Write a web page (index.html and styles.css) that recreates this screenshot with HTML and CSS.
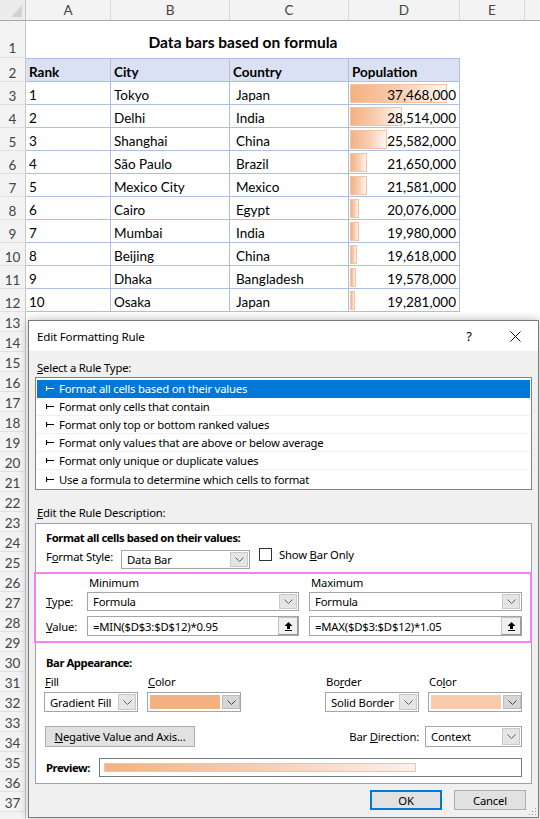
FILE: index.html
```html
<!DOCTYPE html>
<html>
<head>
<meta charset="utf-8">
<title>Data bars based on formula</title>
<link rel="stylesheet" href="styles.css">
</head>
<body>
<div class="sheet">
  <div class="row r-head">
    <div class="rh corner"><svg width="25" height="20" viewBox="0 0 25 20"><path d="M11 17H22V5Z" fill="#d2d2d2"/></svg></div>
    <div class="ch ca">A</div>
    <div class="ch cb">B</div>
    <div class="ch cc">C</div>
    <div class="ch cd">D</div>
    <div class="ch ce">E</div>
    <div class="ch cf"></div>
  </div>
  <div class="row r-title">
    <div class="rh">1</div>
    <div class="title">Data bars based on formula</div>
  </div>
  <div class="row r-tbl r-top">
    <div class="rh">2</div>
    <div class="c ca hd">Rank</div>
    <div class="c cb hd">City</div>
    <div class="c cc hd">Country</div>
    <div class="c cd hd">Population</div>
  </div>
  <div class="row r-tbl"><div class="rh">3</div><div class="c ca">1</div><div class="c cb">Tokyo</div><div class="c cc ct">Japan</div><div class="c cd num"><span class="bar" style="width:97px"></span><span class="v">37,468,000</span></div></div>
  <div class="row r-tbl"><div class="rh">4</div><div class="c ca">2</div><div class="c cb">Delhi</div><div class="c cc ct">India</div><div class="c cd num"><span class="bar" style="width:52px"></span><span class="v">28,514,000</span></div></div>
  <div class="row r-tbl"><div class="rh">5</div><div class="c ca">3</div><div class="c cb">Shanghai</div><div class="c cc ct">China</div><div class="c cd num"><span class="bar" style="width:37px"></span><span class="v">25,582,000</span></div></div>
  <div class="row r-tbl"><div class="rh">6</div><div class="c ca">4</div><div class="c cb">São Paulo</div><div class="c cc ct">Brazil</div><div class="c cd num"><span class="bar" style="width:17px"></span><span class="v">21,650,000</span></div></div>
  <div class="row r-tbl"><div class="rh">7</div><div class="c ca">5</div><div class="c cb">Mexico City</div><div class="c cc ct">Mexico</div><div class="c cd num"><span class="bar" style="width:17px"></span><span class="v">21,581,000</span></div></div>
  <div class="row r-tbl"><div class="rh">8</div><div class="c ca">6</div><div class="c cb">Cairo</div><div class="c cc ct">Egypt</div><div class="c cd num"><span class="bar" style="width:9px"></span><span class="v">20,076,000</span></div></div>
  <div class="row r-tbl"><div class="rh">9</div><div class="c ca">7</div><div class="c cb">Mumbai</div><div class="c cc ct">India</div><div class="c cd num"><span class="bar" style="width:9px"></span><span class="v">19,980,000</span></div></div>
  <div class="row r-tbl"><div class="rh">10</div><div class="c ca">8</div><div class="c cb">Beijing</div><div class="c cc ct">China</div><div class="c cd num"><span class="bar" style="width:7px"></span><span class="v">19,618,000</span></div></div>
  <div class="row r-tbl"><div class="rh">11</div><div class="c ca">9</div><div class="c cb">Dhaka</div><div class="c cc ct">Bangladesh</div><div class="c cd num"><span class="bar" style="width:6px"></span><span class="v">19,578,000</span></div></div>
  <div class="row r-tbl"><div class="rh">12</div><div class="c ca">10</div><div class="c cb">Osaka</div><div class="c cc ct">Japan</div><div class="c cd num"><span class="bar" style="width:5px"></span><span class="v">19,281,000</span></div></div>
  <div class="row r-e"><div class="rh">13</div></div>
  <div class="row r-e"><div class="rh">14</div></div>
  <div class="row r-e"><div class="rh">15</div></div>
  <div class="row r-e"><div class="rh">16</div></div>
  <div class="row r-e"><div class="rh">17</div></div>
  <div class="row r-e"><div class="rh">18</div></div>
  <div class="row r-e"><div class="rh">19</div></div>
  <div class="row r-e"><div class="rh">20</div></div>
  <div class="row r-e"><div class="rh">21</div></div>
  <div class="row r-e"><div class="rh">22</div></div>
  <div class="row r-e"><div class="rh">23</div></div>
  <div class="row r-e"><div class="rh">24</div></div>
  <div class="row r-e"><div class="rh">25</div></div>
  <div class="row r-e"><div class="rh">26</div></div>
  <div class="row r-e"><div class="rh">27</div></div>
  <div class="row r-e"><div class="rh">28</div></div>
  <div class="row r-e"><div class="rh">29</div></div>
  <div class="row r-e"><div class="rh">30</div></div>
  <div class="row r-e"><div class="rh">31</div></div>
  <div class="row r-e"><div class="rh">32</div></div>
  <div class="row r-e"><div class="rh">33</div></div>
  <div class="row r-e"><div class="rh">34</div></div>
  <div class="row r-e"><div class="rh">35</div></div>
  <div class="row r-e"><div class="rh">36</div></div>
  <div class="row r-e"><div class="rh">37</div></div>
  <div class="row r-e"><div class="rh"></div></div>

  <div class="dialog">
    <div class="dlg-title">
      <span class="dlg-caption">Edit Formatting Rule</span>
      <span class="tb-btn">?</span>
      <span class="tb-btn"><svg width="11" height="11" viewBox="0 0 11 11"><path d="M0.5 0.5L10.5 10.5M10.5 0.5L0.5 10.5" stroke="#111" stroke-width="1" fill="none"/></svg></span>
    </div>
    <div class="dlg-body">
      <div class="lbl sect1"><u>S</u>elect a Rule Type:</div>
      <div class="listbox">
        <div class="item sel"><svg class="arr" width="8" height="7" viewBox="0 0 8 7"><path d="M0.5 1V6M0.5 3.5H8" stroke="currentColor" stroke-width="1.2" fill="none"/></svg>Format all cells based on their values</div>
        <div class="item"><svg class="arr" width="8" height="7" viewBox="0 0 8 7"><path d="M0.5 1V6M0.5 3.5H8" stroke="currentColor" stroke-width="1.2" fill="none"/></svg>Format only cells that contain</div>
        <div class="item"><svg class="arr" width="8" height="7" viewBox="0 0 8 7"><path d="M0.5 1V6M0.5 3.5H8" stroke="currentColor" stroke-width="1.2" fill="none"/></svg>Format only top or bottom ranked values</div>
        <div class="item"><svg class="arr" width="8" height="7" viewBox="0 0 8 7"><path d="M0.5 1V6M0.5 3.5H8" stroke="currentColor" stroke-width="1.2" fill="none"/></svg>Format only values that are above or below average</div>
        <div class="item"><svg class="arr" width="8" height="7" viewBox="0 0 8 7"><path d="M0.5 1V6M0.5 3.5H8" stroke="currentColor" stroke-width="1.2" fill="none"/></svg>Format only unique or duplicate values</div>
        <div class="item last"><svg class="arr" width="8" height="7" viewBox="0 0 8 7"><path d="M0.5 1V6M0.5 3.5H8" stroke="currentColor" stroke-width="1.2" fill="none"/></svg>Use a formula to determine which cells to format</div>
      </div>
      <div class="lbl sect2"><u>E</u>dit the Rule Description:</div>
      <div class="desc">
        <div class="b d-title">Format all cells based on their values:</div>
        <div class="style-row">
          <span class="fs-lbl">F<u>o</u>rmat Style:</span>
          <div class="dd dd-style"><span class="dd-text">Data Bar</span><span class="dd-btn"><svg width="9" height="5" viewBox="0 0 9 5"><path d="M0.5 0.5L4.5 4.5L8.5 0.5" fill="none" stroke="#606060"/></svg></span></div>
          <span class="chk"></span>
          <span class="chk-lbl">Show <u>B</u>ar Only</span>
        </div>
        <div class="pink">
          <div class="mm-row r-mm">
            <span class="mm-lbl"></span>
            <span class="mm-col c1 cap">Minimum</span>
            <span class="mm-col c2 cap">Maximum</span>
          </div>
          <div class="mm-row r-type">
            <span class="mm-lbl"><u>T</u>ype:</span>
            <div class="dd mm-col c1"><span class="dd-text">Formula</span><span class="dd-btn"><svg width="9" height="5" viewBox="0 0 9 5"><path d="M0.5 0.5L4.5 4.5L8.5 0.5" fill="none" stroke="#606060"/></svg></span></div>
            <div class="dd mm-col c2"><span class="dd-text">Formula</span><span class="dd-btn"><svg width="9" height="5" viewBox="0 0 9 5"><path d="M0.5 0.5L4.5 4.5L8.5 0.5" fill="none" stroke="#606060"/></svg></span></div>
          </div>
          <div class="mm-row r-val">
            <span class="mm-lbl"><u>V</u>alue:</span>
            <div class="inp mm-col c1"><span class="dd-text">=MIN($D$3:$D$12)*0.95</span><span class="ref-btn"><svg width="9" height="9" viewBox="0 0 9 9"><path d="M4.5 0L8.5 4H6V7H3V4H0.5Z" fill="#000"/><rect x="1" y="8" width="7" height="1" fill="#000"/></svg></span></div>
            <div class="inp mm-col c2"><span class="dd-text">=MAX($D$3:$D$12)*1.05</span><span class="ref-btn"><svg width="9" height="9" viewBox="0 0 9 9"><path d="M4.5 0L8.5 4H6V7H3V4H0.5Z" fill="#000"/><rect x="1" y="8" width="7" height="1" fill="#000"/></svg></span></div>
          </div>
        </div>
        <div class="b bar-app">Bar Appearance:</div>
        <div class="app-row">
          <div class="grp g1">
            <div class="glbl"><u>F</u>ill</div>
            <div class="dd"><span class="dd-text">Gradient Fill</span><span class="dd-btn"><svg width="9" height="5" viewBox="0 0 9 5"><path d="M0.5 0.5L4.5 4.5L8.5 0.5" fill="none" stroke="#606060"/></svg></span></div>
          </div>
          <div class="grp g2">
            <div class="glbl"><u>C</u>olor</div>
            <div class="dd clr"><span class="sw sw1"></span><span class="dd-btn dark"><svg width="9" height="5" viewBox="0 0 9 5"><path d="M0.5 0.5L4.5 4.5L8.5 0.5" fill="none" stroke="#404040"/></svg></span></div>
          </div>
          <div class="grp g3">
            <div class="glbl">Bo<u>r</u>der</div>
            <div class="dd"><span class="dd-text">Solid Border</span><span class="dd-btn"><svg width="9" height="5" viewBox="0 0 9 5"><path d="M0.5 0.5L4.5 4.5L8.5 0.5" fill="none" stroke="#606060"/></svg></span></div>
          </div>
          <div class="grp g4">
            <div class="glbl">Co<u>l</u>or</div>
            <div class="dd clr"><span class="sw sw2"></span><span class="dd-btn dark"><svg width="9" height="5" viewBox="0 0 9 5"><path d="M0.5 0.5L4.5 4.5L8.5 0.5" fill="none" stroke="#404040"/></svg></span></div>
          </div>
        </div>
        <div class="neg-row">
          <div class="btn neg"><u>N</u>egative Value and Axis...</div>
          <span class="bd-lbl">Bar <u>D</u>irection:</span>
          <div class="dd ctx"><span class="dd-text">Context</span><span class="dd-btn"><svg width="9" height="5" viewBox="0 0 9 5"><path d="M0.5 0.5L4.5 4.5L8.5 0.5" fill="none" stroke="#606060"/></svg></span></div>
        </div>
        <div class="prev-row">
          <span class="b prev-lbl">Preview:</span>
          <div class="prev-box"><div class="prev-bar"></div></div>
        </div>
      </div>
      <div class="btn-row">
        <div class="btn ok">OK</div>
        <div class="btn cancel">Cancel</div>
      </div>
    </div>
    <svg class="grip" width="10" height="10" viewBox="0 0 10 10"><g fill="#a0a0a0"><rect x="8" y="2" width="1" height="1"/><rect x="5" y="5" width="1" height="1"/><rect x="8" y="5" width="1" height="1"/><rect x="2" y="8" width="1" height="1"/><rect x="5" y="8" width="1" height="1"/><rect x="8" y="8" width="1" height="1"/></g></svg>
  </div>
</div>
</body>
</html>
```

FILE: styles.css
```css
* { box-sizing: border-box; }
html, body { margin: 0; padding: 0; }
body {
  width: 540px;
  height: 819px;
  overflow: hidden;
  background: #fff;
  font-family: Lato, "Liberation Sans", sans-serif;
  color: #000;
}
.sheet { position: relative; width: 540px; height: 819px; overflow: hidden; }
.row { display: flex; }

/* headers */
.rh {
  width: 26px; flex: none;
  background: #f3f3f3;
  border-right: 1px solid #c8c8c8;
  border-bottom: 1px solid #e0e0e0;
  color: #444;
  font-size: 13.5px;
  line-height: 15px;
  display: flex; align-items: flex-end; justify-content: center;
  padding-bottom: 0;
}
.r-head { height: 21px; background: #f3f3f3; border-bottom: 1px solid #a8a8a8; }
.r-head .rh { border-bottom: none; background: #ececec; padding: 0; align-items: stretch; }
.ch {
  flex: none;
  border-right: 1px solid #d8d8d8;
  color: #444;
  font-size: 13.5px;
  display: flex; align-items: center; justify-content: center;
}
.ca { width: 85px; }
.cb { width: 119px; }
.cc { width: 119px; }
.cd { width: 111px; }
.ce { width: 65px; }
.cf { flex: 1; border-right: none; }

.r-title { height: 37px; }
.r-title .rh { padding-bottom: 1px; }
.title {
  width: 434px;
  display: flex; align-items: center; justify-content: center;
  font-weight: 700;
  font-size: 15.5px;
  padding-top: 4px;
}

.r-tbl { height: 23px; }
.r-top { height: 24px; }
.c {
  flex: none;
  border-right: 1px solid #adc0e4;
  border-bottom: 1px solid #adc0e4;
  display: flex; align-items: flex-end;
  padding: 0 3px 0;
  font-size: 13.5px;
  line-height: 17px;
  position: relative;
  white-space: nowrap;
}
.r-top .c { border-top: 1px solid #adc0e4; }
.hd { background: #d9e1f2; font-weight: 700; }
.ct { padding-left: 6px; }
.num { justify-content: flex-end; }
.num .v { position: relative; }
.bar {
  position: absolute;
  left: 1px; top: 2px; bottom: 1px;
  background: linear-gradient(to right, #f4b183 0%, #f8cdb0 50%, #fef7f3 100%);
  border: 1px solid #f6c29f;
}

.r-e { height: 20px; }

/* dialog */
.dialog {
  position: absolute;
  left: 28px; top: 320px;
  width: 511px; height: 498px;
  border: 1px solid #7a7a7a;
  background: #f0f0f0;
  box-shadow: 0 0 9px rgba(0,0,0,0.28);
  font-family: "Noto Sans", "Open Sans", sans-serif;
  font-size: 11.3px;
  letter-spacing: -0.2px;
  color: #000;
}
.dlg-title {
  height: 30px;
  background: #fff;
  display: flex; align-items: center;
  padding-left: 8px;
}
.dlg-caption { flex: 1; font-size: 11.6px; }
.tb-btn {
  width: 46px; height: 30px;
  display: flex; align-items: center; justify-content: center;
  font-size: 13px;
}
.dlg-body { padding: 0 6px; }
.lbl { line-height: 16px; padding-left: 2px; }
.sect1 { padding-top: 9px; }
.listbox {
  margin-top: 1px;
  height: 113px;
  background: #fff;
  border: 1px solid #828282;
  padding: 2px 1px 1px;
}
.item {
  height: 18px;
  display: flex; align-items: center;
  padding-left: 9px;
  border-bottom: 1px solid #f0f0f0;
  color: #000;
  white-space: nowrap;
}
.item.last { border-bottom: none; }
.item .arr { margin-right: 5px; flex: none; }
.item.sel { background: #0078d7; color: #fff; border-bottom-color: #0078d7; }
.sect2 { margin-top: 15px; }
.desc {
  margin-top: 2px;
  background: #fff;
  border: 1px solid #a0a0a0;
  padding: 6px 0 6px;
}
.b { font-weight: 700; letter-spacing: -0.45px; }
.d-title { line-height: 16px; padding-left: 10px; }
.style-row {
  margin-top: 3px; height: 20px;
  display: flex; align-items: center;
  padding-left: 10px;
}
.fs-lbl { width: 75px; flex: none; margin-top: -6px; }
.dd {
  background: #fff;
  border: 1px solid #a5a5a5;
  display: flex; align-items: center;
  height: 20px;
  position: relative;
}
.dd-text { flex: 1; padding-left: 5px; white-space: nowrap; overflow: hidden; }
.dd-btn {
  flex: none;
  width: 18px; align-self: stretch;
  margin: 1px;
  background: #e5e5e5;
  border: 1px solid #c9c9c9;
  display: flex; align-items: center; justify-content: center;
}
.dd-btn.dark { background: #d6d6d6; border-color: #bdbdbd; margin: 0; }
.dd-style { width: 129px; height: 19px; }
.dd-style .dd-text { padding-left: 5px; }
.chk {
  width: 13px; height: 13px; flex: none;
  border: 1px solid #333;
  background: #fff;
  margin-left: 9px;
  align-self: flex-start;
  margin-top: -1px;
}
.chk-lbl { margin-left: 7px; align-self: flex-start; line-height: 16px; margin-top: -2px; }

.pink {
  margin: 3px -1px 0 -2px;
  border: 2px solid #f77ef7;
  padding-bottom: 5px;
}
.mm-row { display: flex; align-items: center; }
.mm-lbl { width: 51px; flex: none; padding-left: 10px; }
.mm-col.c1 { width: 212px; flex: none; }
.mm-col.c2 { width: 213px; flex: none; margin-left: 10px; }
.cap { padding-left: 2px; }
.r-mm { height: 16px; }
.r-type { margin-top: 2px; height: 19px; }
.r-type .dd { height: 19px; }
.r-val { margin-top: 5px; height: 20px; }
.inp {
  background: #fff;
  border: 1px solid #a5a5a5;
  display: flex; align-items: center;
  height: 20px;
}
.ref-btn {
  flex: none;
  width: 20px; align-self: stretch;
  background: #f0f0f0;
  border: 1px solid #c4c4c4;
  border-right-color: #9a9a9a;
  border-bottom-color: #9a9a9a;
  display: flex; align-items: center; justify-content: center;
}

.bar-app { margin-top: 12px; line-height: 16px; padding-left: 10px; }
.app-row { display: flex; margin-top: 3px; padding-left: 8px; }
.grp { width: 94px; flex: none; }
.g2, .g4 { margin-left: 9px; }
.g3 { margin-left: 84px; }
.glbl { line-height: 16px; padding-left: 1px; }
.grp .dd { margin-top: 2px; }
.clr { padding: 2px 0 2px 2px; }
.sw { flex: 1; align-self: stretch; margin-right: 2px; }
.sw1 { background: #f4b183; }
.sw2 { background: #f8cbad; }

.neg-row {
  margin-top: 13px; height: 22px;
  display: flex; align-items: center;
  padding-left: 9px;
  padding-right: 9px;
}
.btn {
  background: #e1e1e1;
  border: 1px solid #adadad;
  display: flex; align-items: center; justify-content: center;
  height: 21px;
}
.neg { width: 150px; }
.bd-lbl { margin-left: auto; margin-top: 1px; }
.ctx { width: 97px; height: 21px; margin-left: 6px; }

.prev-row {
  margin-top: 11px; height: 19px;
  display: flex; align-items: center;
  padding-left: 10px;
}
.prev-lbl { width: 53px; flex: none; }
.prev-box {
  width: 423px; height: 19px;
  border: 1px solid #7a7a7a;
  background: #fff;
  padding: 4px 4px;
}
.prev-bar {
  width: 312px; height: 100%;
  background: linear-gradient(to right, #f4b183 0%, #f8cdb0 50%, #fdf0e8 100%);
  border: 1px solid #f6c29f;
}

.btn-row {
  margin-top: 6px;
  display: flex; justify-content: flex-end;
  padding-right: 6px;
}
.btn-row .btn { width: 72px; height: 20px; }
.ok { border: 2px solid #0078d7; }
.cancel { margin-left: 12px; }
.grip { position: absolute; right: 1px; bottom: 1px; }
```
